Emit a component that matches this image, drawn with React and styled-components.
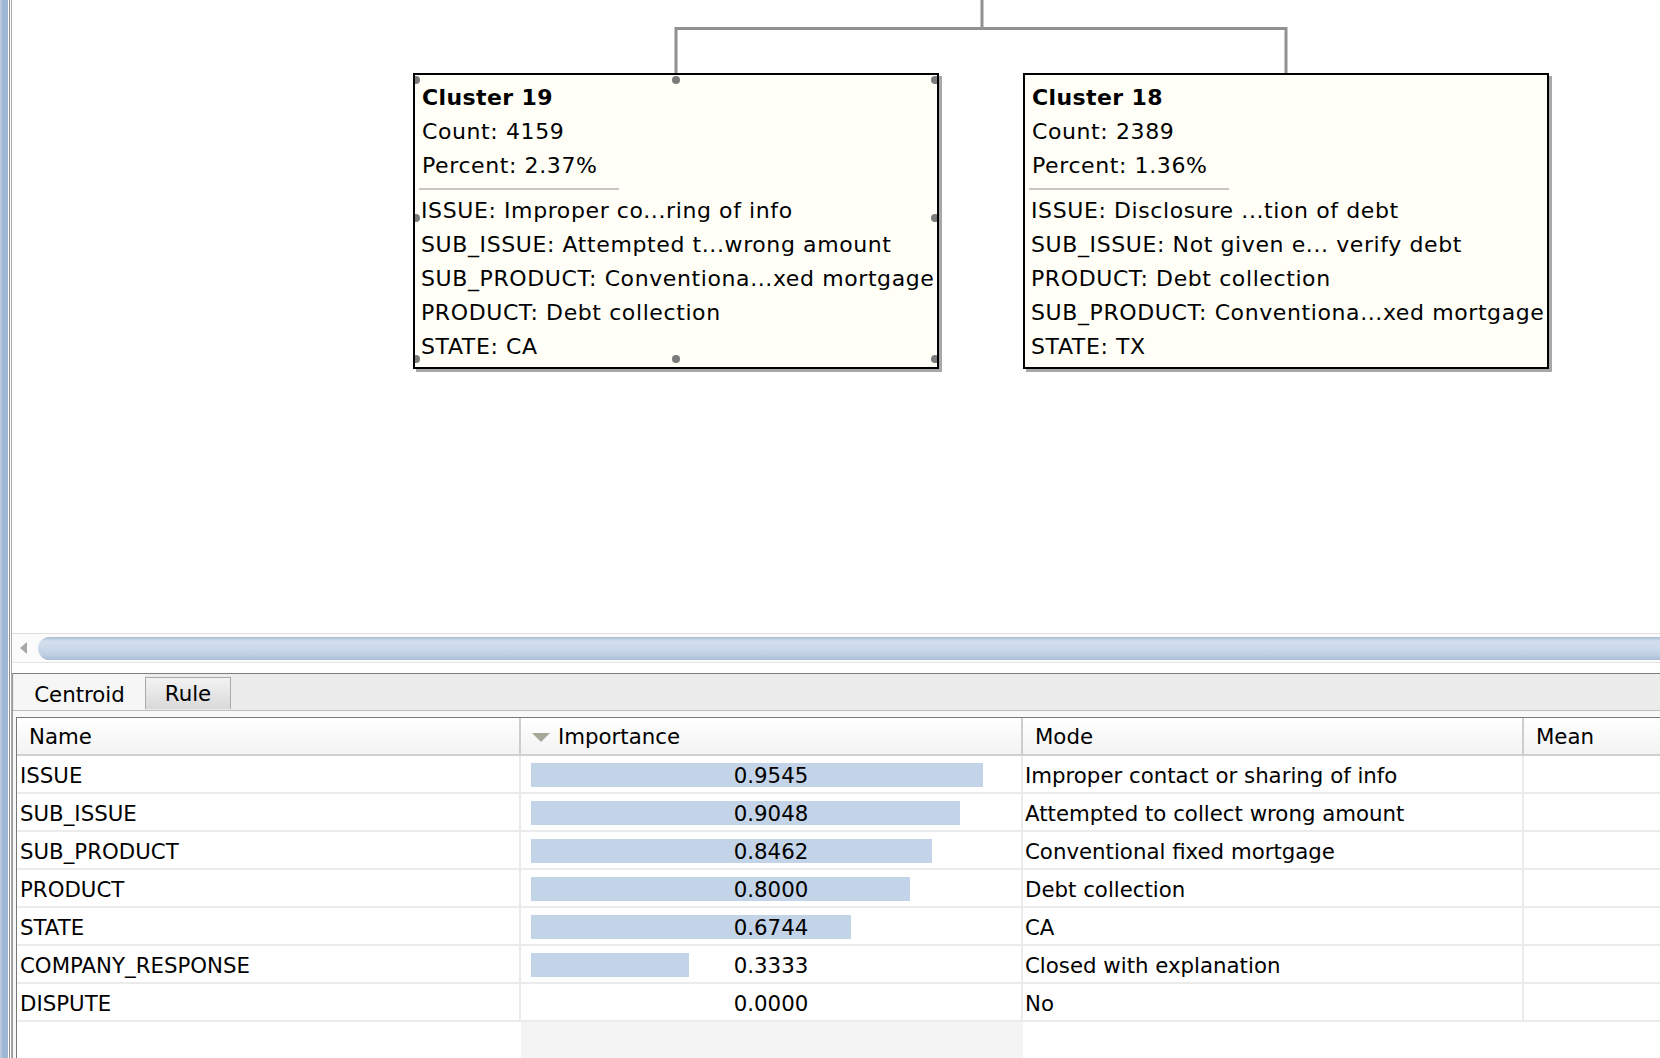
import React from 'react';
import styled, { createGlobalStyle } from 'styled-components';

const GlobalStyle = createGlobalStyle`
  html, body {
    margin: 0;
    padding: 0;
    background: #fff;
    overflow: hidden;
  }
  body {
    font-family: "DejaVu Sans", Verdana, sans-serif;
    color: #000;
  }
`;

const clusters = [
  {
    id: 19,
    x: 401,
    count: 4159,
    percent: '2.37%',
    selected: true,
    items: [
      'ISSUE: Improper co...ring of info',
      'SUB_ISSUE: Attempted t...wrong amount',
      'SUB_PRODUCT: Conventiona...xed mortgage',
      'PRODUCT: Debt collection',
      'STATE: CA',
    ],
  },
  {
    id: 18,
    x: 1011,
    count: 2389,
    percent: '1.36%',
    selected: false,
    items: [
      'ISSUE: Disclosure ...tion of debt',
      'SUB_ISSUE: Not given e... verify debt',
      'PRODUCT: Debt collection',
      'SUB_PRODUCT: Conventiona...xed mortgage',
      'STATE: TX',
    ],
  },
];

const rows = [
  { name: 'ISSUE', importance: 0.9545, mode: 'Improper contact or sharing of info' },
  { name: 'SUB_ISSUE', importance: 0.9048, mode: 'Attempted to collect wrong amount' },
  { name: 'SUB_PRODUCT', importance: 0.8462, mode: 'Conventional fixed mortgage' },
  { name: 'PRODUCT', importance: 0.8, mode: 'Debt collection' },
  { name: 'STATE', importance: 0.6744, mode: 'CA' },
  { name: 'COMPANY_RESPONSE', importance: 0.3333, mode: 'Closed with explanation' },
  { name: 'DISPUTE', importance: 0, mode: 'No' },
];

// handle spots on the selected node (inside the border)
const handles = [
  [1, 5], [261, 5], [520, 5],
  [1, 143], [520, 143],
  [1, 284], [261, 284], [520, 284],
];

const COLS = '504px 502px 501px 500px';
const BAR_MAX = 474;

const Frame = styled.div`
  display: flex;
  width: 1660px;
  height: 1058px;
  overflow: hidden;
`;

const SideStrip = styled.div`
  flex: 0 0 8px;
  background: linear-gradient(to right, #b7c8dc 0 2px, #9db6d3 2px);
`;

const SplitEdge = styled.div`
  flex: 0 0 4px;
  background: linear-gradient(
    to right,
    #fff 0 1px,
    #8c8c8c 1px 2px,
    #fff 2px 3px,
    #a9a9a9 3px 4px
  );
`;

const Main = styled.div`
  flex: 1;
  min-width: 0;
  display: flex;
  flex-direction: column;
`;

const Canvas = styled.div`
  position: relative;
  flex: 0 0 633px;
  background: #fff;
  overflow: hidden;
`;

const Edges = styled.svg`
  position: absolute;
  left: 0;
  top: 0;
`;

const Node = styled.div`
  position: absolute;
  left: ${p => p.$x}px;
  top: 73px;
  width: 526px;
  height: 296px;
  box-sizing: border-box;
  border: 2px solid #000;
  background: #fffff7;
  box-shadow: 3px 3px 0 #a8a8a8;
  padding: 6px 7px;
  font-size: 22px;
  letter-spacing: 0.6px;
  line-height: 34px;
  white-space: nowrap;
  overflow: hidden;
`;

const NodeTitle = styled.div`
  font-weight: bold;
  letter-spacing: 0.4px;
`;

const NodeLine = styled.div`
  margin-left: ${p => (p.$item ? '-1px' : '0')};
`;

const NodeRule = styled.div`
  width: 200px;
  height: 2px;
  background: #c6c6c6;
  margin: 5px 0 4px -3px;
`;

const Handle = styled.span`
  position: absolute;
  left: ${p => p.$x - 4}px;
  top: ${p => p.$y - 4}px;
  width: 8px;
  height: 8px;
  border-radius: 50%;
  background: #7b7b7b;
`;

const ScrollBar = styled.div`
  flex: 0 0 30px;
  box-sizing: border-box;
  display: flex;
  align-items: center;
  border-top: 1px solid #dedede;
  border-bottom: 1px solid #e3e3e3;
  background: #fbfbfb;
`;

const ScrollArrow = styled.span`
  width: 0;
  height: 0;
  margin-left: 8px;
  border-top: 6px solid transparent;
  border-bottom: 6px solid transparent;
  border-right: 7px solid #a6a6a6;
`;

const ScrollThumb = styled.div`
  flex: 1;
  height: 23px;
  margin-left: 11px;
  border-radius: 12px 0 0 12px;
  background: linear-gradient(
    to bottom,
    #a9bcd2 0%,
    #d3dfed 18%,
    #ccdaea 45%,
    #c0d1e5 75%,
    #aabdd3 100%
  );
`;

const SplitGap = styled.div`
  flex: 0 0 10px;
  background: #fff;
`;

const BottomPanel = styled.div`
  flex: 1;
  min-height: 0;
  display: flex;
  flex-direction: column;
  border-top: 1px solid #7f7f7f;
  border-left: 1px solid #9a9a9a;
  background: #ececec;
`;

const TabStrip = styled.div`
  flex: 0 0 36px;
  display: flex;
  align-items: flex-end;
  padding-left: 1px;
`;

const Tab = styled.div`
  box-sizing: border-box;
  width: ${p => (p.$active ? 131 : 86)}px;
  height: ${p => (p.$active ? 36 : 32)}px;
  display: flex;
  align-items: center;
  justify-content: center;
  padding-top: ${p => (p.$active ? 4 : 0)}px;
  font-size: 21.3px;
  background: ${p =>
    p.$active ? '#f6f6f6' : 'linear-gradient(to bottom, #f3f3f3, #d9d9d9)'};
  border: ${p => (p.$active ? 'none' : '1px solid #a9a9a9')};
  border-bottom: none;
  margin-bottom: ${p => (p.$active ? 0 : 1)}px;
`;

const TabBody = styled.div`
  flex: 1;
  min-height: 0;
  display: flex;
  border-top: 1px solid #bebebe;
  background: #f8f8f8;
  padding: 6px 0 0 3px;
`;

const Table = styled.div`
  flex: 1;
  min-width: 0;
  display: flex;
  flex-direction: column;
  border-top: 1px solid #787878;
  border-left: 1px solid #787878;
  background: #fff;
  overflow: hidden;
  font-size: 21.3px;
`;

const HeadRow = styled.div`
  flex: 0 0 38px;
  box-sizing: border-box;
  display: grid;
  grid-template-columns: ${COLS};
  border-bottom: 2px solid #d0d0d0;
  background: linear-gradient(to bottom, #ffffff, #f3f3f3);
`;

const HeadCell = styled.div`
  display: flex;
  align-items: center;
  gap: 8px;
  padding-left: ${p => (p.$sorted ? 11 : 12)}px;
  border-right: 2px solid #cdcdcd;
  white-space: nowrap;
`;

const SortMark = styled.span`
  width: 0;
  height: 0;
  border-left: 9px solid transparent;
  border-right: 9px solid transparent;
  border-top: 9px solid #a8a89a;
  margin-top: 2px;
`;

const Row = styled.div`
  flex: 0 0 38px;
  box-sizing: border-box;
  display: grid;
  grid-template-columns: ${COLS};
  border-bottom: 2px solid #ebebeb;
`;

const Cell = styled.div`
  display: flex;
  align-items: center;
  padding-left: ${p => p.$pad || 0}px;
  padding-top: 2px;
  border-right: 2px solid #ebebeb;
  white-space: nowrap;
  overflow: hidden;
`;

const BarCell = styled.div`
  display: grid;
  align-items: center;
  padding-top: 2px;
  border-right: 2px solid #ebebeb;
`;

const Bar = styled.div`
  grid-area: 1 / 1;
  justify-self: start;
  margin-left: 10px;
  height: 24px;
  background: #c3d3e8;
`;

const BarValue = styled.span`
  grid-area: 1 / 1;
  justify-self: center;
`;

const Filler = styled.div`
  flex: 1;
  display: grid;
  grid-template-columns: ${COLS};
`;

const FillerCell = styled.div`
  background: ${p => (p.$shaded ? '#f4f4f4' : '#fff')};
`;

const ClusterNode = ({ c }) => (
  <Node $x={c.x}>
    <NodeTitle>Cluster {c.id}</NodeTitle>
    <NodeLine>Count: {c.count}</NodeLine>
    <NodeLine>Percent: {c.percent}</NodeLine>
    <NodeRule />
    {c.items.map(t => (
      <NodeLine $item key={t}>{t}</NodeLine>
    ))}
    {c.selected && handles.map(([x, y]) => <Handle key={`${x}-${y}`} $x={x} $y={y} />)}
  </Node>
);

const App = () => (
  <>
    <GlobalStyle />
    <Frame>
      <SideStrip />
      <SplitEdge />
      <Main>
        <Canvas>
          <Edges width="1648" height="633">
            <g stroke="#919191" strokeWidth="3" fill="none">
              <path d="M970 0 V28.5" />
              <path d="M664 73 V28.5 H1274 V73" />
            </g>
          </Edges>
          {clusters.map(c => (
            <ClusterNode key={c.id} c={c} />
          ))}
        </Canvas>
        <ScrollBar>
          <ScrollArrow />
          <ScrollThumb />
        </ScrollBar>
        <SplitGap />
        <BottomPanel>
          <TabStrip>
            <Tab $active>Centroid</Tab>
            <Tab>Rule</Tab>
          </TabStrip>
          <TabBody>
            <Table>
              <HeadRow>
                <HeadCell>Name</HeadCell>
                <HeadCell $sorted>
                  <SortMark />
                  Importance
                </HeadCell>
                <HeadCell>Mode</HeadCell>
                <HeadCell>Mean</HeadCell>
              </HeadRow>
              {rows.map(r => (
                <Row key={r.name}>
                  <Cell $pad={3}>{r.name}</Cell>
                  <BarCell>
                    {r.importance > 0 && (
                      <Bar style={{ width: `${Math.round(r.importance * BAR_MAX)}px` }} />
                    )}
                    <BarValue>{r.importance.toFixed(4)}</BarValue>
                  </BarCell>
                  <Cell $pad={2}>{r.mode}</Cell>
                  <Cell />
                </Row>
              ))}
              <Filler>
                <FillerCell />
                <FillerCell $shaded />
                <FillerCell />
                <FillerCell />
              </Filler>
            </Table>
          </TabBody>
        </BottomPanel>
      </Main>
    </Frame>
  </>
);

export default App;
